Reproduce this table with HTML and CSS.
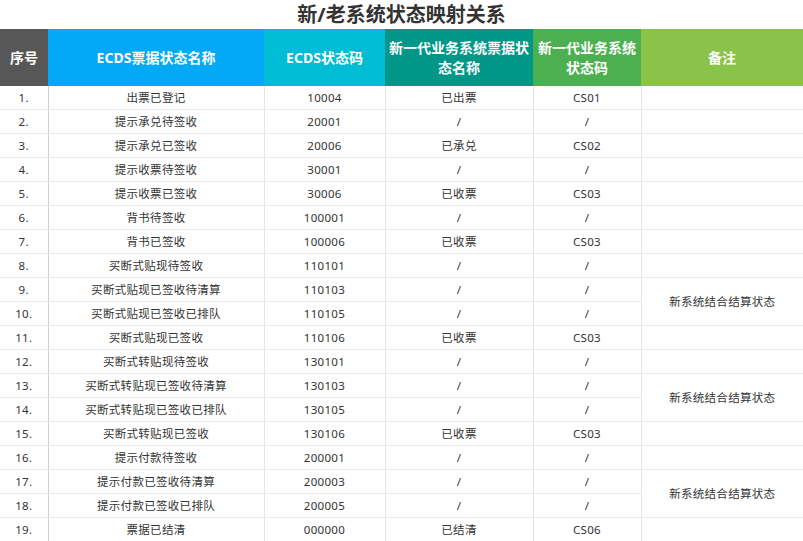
FILE: index.html
```html
<!DOCTYPE html>
<html lang="zh-CN">
<head>
<meta charset="utf-8">
<title>新/老系统状态映射关系</title>
<link rel="stylesheet" href="styles.css">
</head>
<body>
<h1 class="title">新/老系统状态映射关系</h1>
<table class="map">
<colgroup>
<col class="c-no"><col class="c-name"><col class="c-code"><col class="c-nname"><col class="c-ncode"><col class="c-note">
</colgroup>
<thead>
<tr>
<th class="h-no">序号</th>
<th class="h-name">ECDS票据状态名称</th>
<th class="h-code">ECDS状态码</th>
<th class="h-nname">新一代业务系统票据状<br>态名称</th>
<th class="h-ncode">新一代业务系统<br>状态码</th>
<th class="h-note">备注</th>
</tr>
</thead>
<tbody>
<tr><td class="no">1.</td><td>出票已登记</td><td>10004</td><td>已出票</td><td>CS01</td><td class="note"></td></tr>
<tr><td class="no">2.</td><td>提示承兑待签收</td><td>20001</td><td>/</td><td>/</td><td class="note"></td></tr>
<tr><td class="no">3.</td><td>提示承兑已签收</td><td>20006</td><td>已承兑</td><td>CS02</td><td class="note"></td></tr>
<tr><td class="no">4.</td><td>提示收票待签收</td><td>30001</td><td>/</td><td>/</td><td class="note"></td></tr>
<tr><td class="no">5.</td><td>提示收票已签收</td><td>30006</td><td>已收票</td><td>CS03</td><td class="note"></td></tr>
<tr><td class="no">6.</td><td>背书待签收</td><td>100001</td><td>/</td><td>/</td><td class="note"></td></tr>
<tr><td class="no">7.</td><td>背书已签收</td><td>100006</td><td>已收票</td><td>CS03</td><td class="note"></td></tr>
<tr><td class="no">8.</td><td>买断式贴现待签收</td><td>110101</td><td>/</td><td>/</td><td class="note"></td></tr>
<tr><td class="no">9.</td><td>买断式贴现已签收待清算</td><td>110103</td><td>/</td><td>/</td><td class="note" rowspan="2">新系统结合结算状态</td></tr>
<tr><td class="no">10.</td><td>买断式贴现已签收已排队</td><td>110105</td><td>/</td><td>/</td></tr>
<tr><td class="no">11.</td><td>买断式贴现已签收</td><td>110106</td><td>已收票</td><td>CS03</td><td class="note"></td></tr>
<tr><td class="no">12.</td><td>买断式转贴现待签收</td><td>130101</td><td>/</td><td>/</td><td class="note"></td></tr>
<tr><td class="no">13.</td><td>买断式转贴现已签收待清算</td><td>130103</td><td>/</td><td>/</td><td class="note" rowspan="2">新系统结合结算状态</td></tr>
<tr><td class="no">14.</td><td>买断式转贴现已签收已排队</td><td>130105</td><td>/</td><td>/</td></tr>
<tr><td class="no">15.</td><td>买断式转贴现已签收</td><td>130106</td><td>已收票</td><td>CS03</td><td class="note"></td></tr>
<tr><td class="no">16.</td><td>提示付款待签收</td><td>200001</td><td>/</td><td>/</td><td class="note"></td></tr>
<tr><td class="no">17.</td><td>提示付款已签收待清算</td><td>200003</td><td>/</td><td>/</td><td class="note" rowspan="2">新系统结合结算状态</td></tr>
<tr><td class="no">18.</td><td>提示付款已签收已排队</td><td>200005</td><td>/</td><td>/</td></tr>
<tr><td class="no">19.</td><td>票据已结清</td><td>000000</td><td>已结清</td><td>CS06</td><td class="note"></td></tr>
</tbody>
</table>
</body>
</html>
```
FILE: styles.css
```css
html, body {
  margin: 0;
  padding: 0;
  background: #ffffff;
}
body {
  font-family: "Noto Sans", "Noto Sans CJK SC", sans-serif;
  color: #333333;
  width: 803px;
  overflow: hidden;
}
.title {
  margin: 0;
  height: 29px;
  line-height: 29px;
  text-align: center;
  font-size: 20px;
  font-weight: bold;
  color: #333333;
}
.map {
  width: 803px;
  table-layout: fixed;
  border-collapse: collapse;
}
.c-no { width: 48px; }
.c-name { width: 216px; }
.c-code { width: 121px; }
.c-nname { width: 148px; }
.c-ncode { width: 108px; }
.c-note { width: 162px; }
.map th {
  height: 57px;
  padding: 0;
  color: #ffffff;
  font-size: 14px;
  font-weight: bold;
  line-height: 20px;
  text-align: center;
  vertical-align: middle;
}
.h-no { background: #575757; }
.h-name { background: #03a9f4; }
.h-code { background: #00bcd4; }
.h-nname { background: #009688; }
.h-ncode { background: #4caf50; }
.h-note { background: #8bc34a; }
.map td {
  height: 23px;
  padding: 0;
  font-size: 11.5px;
  line-height: 16px;
  letter-spacing: 0.3px;
  text-align: center;
  vertical-align: middle;
  border-bottom: 1px solid #e9e9e9;
  border-left: 1px solid #e4e4e4;
  color: #333333;
}
.map td.no {
  border-left: none;
  border-right: 1px solid #cfcfcf;
}
```
